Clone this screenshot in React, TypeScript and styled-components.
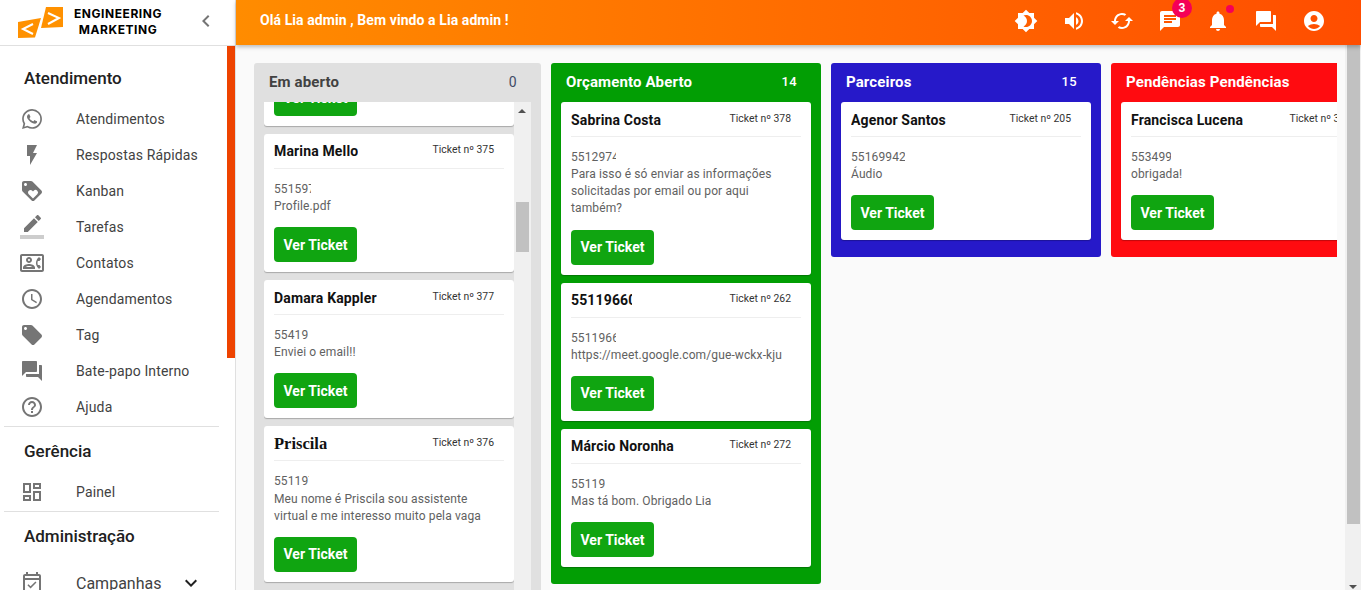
import React from "react";
import styled, { createGlobalStyle } from "styled-components";
import {
  MdAccessTime,
  MdAccountCircle,
  MdBrightness4,
  MdCached,
  MdChat,
  MdChevronLeft,
  MdExpandMore,
  MdFlashOn,
  MdForum,
  MdHelpOutline,
  MdLocalOffer,
  MdLoyalty,
  MdNotifications,
  MdOutlineContactPhone,
  MdOutlineDashboard,
  MdOutlineEventAvailable,
  MdVolumeUp,
  MdWhatsapp,
} from "react-icons/md";

interface Ticket {
  name: string;
  number: string;
  phone: string;
  phoneWidth: number;
  message: string;
  nameWidth?: number;
  serif?: boolean;
}

interface LaneData {
  title: string;
  count: number;
  color: string;
  tickets: Ticket[];
}

function TaskIcon() {
  return (
    <svg width="1em" height="1em" viewBox="0 0 24 24" fill="currentColor">
      <path d="M17.75 7 14 3.25l-10 10V17h3.75l10-10zm2.96-2.96c.39-.39.39-1.02 0-1.41L18.37.29a.9959.9959 0 0 0-1.41 0L15 2.25 18.75 6l1.96-1.96z" />
      <path d="M0 20h24v4H0z" fillOpacity=".36" />
    </svg>
  );
}

const attendance = [
  { label: "Atendimentos", icon: <MdWhatsapp /> },
  { label: "Respostas Rápidas", icon: <MdFlashOn /> },
  { label: "Kanban", icon: <MdLoyalty /> },
  { label: "Tarefas", icon: <TaskIcon /> },
  { label: "Contatos", icon: <MdOutlineContactPhone /> },
  { label: "Agendamentos", icon: <MdAccessTime /> },
  { label: "Tag", icon: <MdLocalOffer /> },
  { label: "Bate-papo Interno", icon: <MdForum /> },
  { label: "Ajuda", icon: <MdHelpOutline /> },
];

const openTickets: Ticket[] = [
  { name: "Fernanda Alves", number: "374", phone: "551188", phoneWidth: 34, message: "Obrigada" },
  { name: "Marina Mello", number: "375", phone: "5515977", phoneWidth: 37, message: "Profile.pdf" },
  { name: "Damara Kappler", number: "377", phone: "55419", phoneWidth: 34, message: "Enviei o email!!" },
  {
    name: "Priscila",
    number: "376",
    phone: "551197",
    phoneWidth: 35,
    message: "Meu nome é Priscila sou assistente virtual e me interesso muito pela vaga",
    serif: true,
  },
];

const lanes: LaneData[] = [
  {
    title: "Orçamento Aberto",
    count: 14,
    color: "#029e04",
    tickets: [
      {
        name: "Sabrina Costa",
        number: "378",
        phone: "5512974",
        phoneWidth: 45,
        message: "Para isso é só enviar as informações solicitadas por email ou por aqui também?",
      },
      {
        name: "55119660",
        nameWidth: 61,
        number: "262",
        phone: "5511966",
        phoneWidth: 45,
        message: "https://meet.google.com/gue-wckx-kju",
      },
      { name: "Márcio Noronha", number: "272", phone: "55119", phoneWidth: 34, message: "Mas tá bom. Obrigado Lia" },
    ],
  },
  {
    title: "Parceiros",
    count: 15,
    color: "#2619c9",
    tickets: [
      { name: "Agenor Santos", number: "205", phone: "55169942", phoneWidth: 54, message: "Áudio" },
    ],
  },
  {
    title: "Pendências Pendências",
    count: 9,
    color: "#ff0b10",
    tickets: [
      { name: "Francisca Lucena", number: "351", phone: "553499", phoneWidth: 40, message: "obrigada!" },
    ],
  },
];

const GlobalStyle = createGlobalStyle`
  html, body {
    margin: 0;
    height: 100%;
    overflow: hidden;
    font-family: Roboto, "Noto Sans", sans-serif;
  }
  * {
    box-sizing: border-box;
  }
`;

const Layout = styled.div`
  display: flex;
  width: 100vw;
  height: 100vh;
  background: #fafafa;
`;

const Sidebar = styled.aside`
  display: flex;
  flex-direction: column;
  flex: none;
  width: 236px;
  height: 100%;
  background: #fff;
  border-right: 1px solid #e0e0e0;
`;

const Brand = styled.div`
  display: flex;
  align-items: center;
  flex: none;
  height: 46px;
  padding: 0 18px;
  border-bottom: 1px solid #e0e0e0;
`;

const BrandName = styled.div`
  width: 106px;
  margin: -2px 0 0 1px;
  font-family: Inter, sans-serif;
  font-size: 12px;
  font-weight: 700;
  line-height: 16px;
  letter-spacing: 0.55px;
  text-align: center;
  color: #000;
`;

const CollapseButton = styled.span`
  display: flex;
  margin: -4px -1px 0 auto;
  font-size: 24px;
  color: #757575;
`;

const Nav = styled.nav`
  position: relative;
  flex: 1;
  min-height: 0;
  overflow: hidden;
`;

const NavThumb = styled.div`
  position: absolute;
  top: 0;
  right: 0;
  width: 8px;
  height: 312px;
  background: #ee4300;
`;

const SectionTitle = styled.div`
  display: flex;
  align-items: center;
  height: 44px;
  padding-left: 24px;
  font-size: 17px;
  font-weight: 500;
  color: #212121;
`;

const FirstSection = styled(SectionTitle)`
  height: 36px;
  margin-top: 14px;
  margin-bottom: 5px;
`;

const MiddleSection = styled(SectionTitle)`
  margin-bottom: 1px;
`;

const NavRow = styled.div`
  display: flex;
  align-items: center;
  height: 36px;
  padding-left: 20px;
`;

const CampaignRow = styled(NavRow)`
  margin-top: 7px;
`;

const NavIcon = styled.span`
  display: flex;
  justify-content: center;
  width: 24px;
  font-size: 24px;
  color: #757575;
`;

const NavLabel = styled.span<{ $large?: boolean }>`
  margin-left: 32px;
  font-size: ${(p) => (p.$large ? "16px" : "14px")};
  letter-spacing: ${(p) => (p.$large ? "0" : "0.14px")};
  color: #424242;
`;

const NavChevron = styled.span`
  display: flex;
  margin-left: 18px;
  font-size: 24px;
  color: #212121;
`;

const NavDivider = styled.div`
  width: 215px;
  height: 1px;
  margin: 1px 0 2px 4px;
  background: #e0e0e0;
`;

const Content = styled.div`
  display: flex;
  flex-direction: column;
  flex: 1;
  min-width: 0;
  height: 100%;
`;

const TopBar = styled.header`
  position: relative;
  z-index: 2;
  display: flex;
  align-items: center;
  flex: none;
  height: 45px;
  padding: 0 35px 3px 24px;
  background: linear-gradient(to right, #ff8c00, #ff4d00);
  box-shadow: 0 2px 4px rgba(0, 0, 0, 0.25);
`;

const Greeting = styled.div`
  flex: 1;
  padding-bottom: 2px;
  font-size: 14px;
  font-weight: 700;
  letter-spacing: 0.08px;
  color: #fff;
`;

const TopIcons = styled.div`
  display: flex;
  gap: 24px;
`;

const TopIcon = styled.span`
  position: relative;
  display: flex;
  font-size: 24px;
  color: #fff;
`;

const CountBadge = styled.span`
  position: absolute;
  top: -11px;
  right: -10px;
  display: flex;
  align-items: center;
  justify-content: center;
  width: 20px;
  height: 20px;
  border-radius: 50%;
  background: #f50057;
  font-size: 12px;
  font-weight: 700;
  color: #fff;
`;

const DotBadge = styled.span`
  position: absolute;
  top: -4px;
  right: -4px;
  width: 8px;
  height: 8px;
  border-radius: 50%;
  background: #f50057;
`;

const Main = styled.main`
  position: relative;
  flex: 1;
  min-height: 0;
  padding-right: 24px;
  overflow: hidden;
`;

const ScrollTrack = styled.div<{ $width: number }>`
  position: absolute;
  top: 0;
  right: 0;
  bottom: 0;
  width: ${(p) => p.$width}px;
  background: #f0f0f0;
`;

const ScrollThumb = styled.div<{ $top: number; $height: number }>`
  position: absolute;
  top: ${(p) => p.$top}px;
  right: 2px;
  left: 2px;
  height: ${(p) => p.$height}px;
  background: #c1c1c1;
`;

const PageThumb = styled(ScrollThumb)`
  right: 1px;
`;

const ArrowUp = styled.div`
  position: absolute;
  top: 7px;
  left: 4px;
  border: 4px solid transparent;
  border-top: 0;
  border-bottom: 4px solid #505050;
`;

const ArrowDown = styled.div`
  position: absolute;
  bottom: 1px;
  left: 4px;
  border: 4px solid transparent;
  border-bottom: 0;
  border-top: 4px solid #505050;
`;

const Board = styled.div`
  display: flex;
  align-items: flex-start;
  gap: 10px;
  height: 620px;
  margin-left: 18px;
  padding-top: 18px;
  overflow: hidden;
`;

const LaneBox = styled.section<{ $color: string; $open?: boolean }>`
  flex: none;
  width: ${(p) => (p.$open ? "287px" : "270px")};
  padding: 0 10px ${(p) => (p.$open ? "0" : "17px")};
  border-radius: 3px;
  background: ${(p) => p.$color};
`;

const LaneHeader = styled.div<{ $open?: boolean }>`
  display: flex;
  align-items: center;
  justify-content: space-between;
  height: 39px;
  padding: 0 14px 2px 5px;
  font-size: 15px;
  font-weight: 700;
  letter-spacing: 0.13px;
  color: ${(p) => (p.$open ? "#424242" : "#fff")};
`;

const LaneCount = styled.span<{ $open?: boolean }>`
  font-size: ${(p) => (p.$open ? "14px" : "13px")};
  font-weight: ${(p) => (p.$open ? 400 : 500)};
  letter-spacing: 0.4px;
  color: ${(p) => (p.$open ? "#3f4b66" : "#fff")};
`;

const TicketList = styled.div`
  display: flex;
  flex-direction: column;
  gap: 8px;
`;

const ListViewport = styled.div`
  position: relative;
  height: 548px;
  overflow: hidden;
`;

const ScrolledList = styled(TicketList)`
  margin-top: -114.5px;
`;

const Card = styled.article`
  flex: none;
  width: 250px;
  padding: 0 10px 10px;
  border-radius: 3px;
  background: #fff;
  box-shadow: 0 1px 1px rgba(0, 0, 0, 0.25);
`;

const CardHeader = styled.div`
  display: flex;
  align-items: center;
  justify-content: space-between;
  height: 35px;
  padding: 1px 10px 0 0;
  border-bottom: 1px solid #eee;
`;

const CardName = styled.span<{ $serif?: boolean; $width?: number }>`
  display: block;
  max-width: ${(p) => (p.$width ? `${p.$width}px` : "none")};
  overflow: hidden;
  white-space: nowrap;
  font-family: ${(p) => (p.$serif ? '"Liberation Serif", serif' : "inherit")};
  font-size: ${(p) => (p.$serif ? "16.5px" : "14px")};
  font-weight: 700;
  letter-spacing: ${(p) => (p.$serif ? "0" : "0.15px")};
  color: #111;
`;

const TicketNumber = styled.span`
  flex: none;
  margin-bottom: 3px;
  font-size: 10.4px;
  color: #333;
`;

const CardBody = styled.div`
  padding: 12px 0;
  font-size: 12px;
  line-height: 17.16px;
  letter-spacing: 0.12px;
  color: #616161;
`;

const Phone = styled.span<{ $width: number }>`
  display: block;
  width: ${(p) => p.$width}px;
  overflow: hidden;
  white-space: nowrap;
`;

const TicketButton = styled.button`
  display: block;
  width: 83px;
  height: 35px;
  padding: 0;
  border: 0;
  border-radius: 4px;
  background: #10a511;
  font-family: inherit;
  font-size: 14px;
  font-weight: 700;
  color: #fff;
`;

function Logo() {
  return (
    <svg width="46" height="32" viewBox="0 0 46 32">
      <polygon points="0,15 23,11 17,30.5 0,31" fill="#ff9100" />
      <polygon points="28,0 45,0 45,20 23,21" fill="#ff9100" />
      <polyline points="15,17 5,22 15,27" fill="none" stroke="#fff" strokeWidth="2" />
      <polyline points="30,6 41,11 30,17" fill="none" stroke="#fff" strokeWidth="2" />
    </svg>
  );
}

function TicketCard({ ticket }: { ticket: Ticket }) {
  return (
    <Card>
      <CardHeader>
        <CardName $serif={ticket.serif} $width={ticket.nameWidth}>
          {ticket.name}
        </CardName>
        <TicketNumber>Ticket nº {ticket.number}</TicketNumber>
      </CardHeader>
      <CardBody>
        <Phone $width={ticket.phoneWidth}>{ticket.phone}</Phone>
        {ticket.message}
      </CardBody>
      <TicketButton>Ver Ticket</TicketButton>
    </Card>
  );
}

export default function App() {
  return (
    <Layout>
      <GlobalStyle />
      <Sidebar>
        <Brand>
          <Logo />
          <BrandName>
            ENGINEERING
            <br />
            MARKETING
          </BrandName>
          <CollapseButton>
            <MdChevronLeft />
          </CollapseButton>
        </Brand>
        <Nav>
          <FirstSection>Atendimento</FirstSection>
          {attendance.map((item) => (
            <NavRow key={item.label}>
              <NavIcon>{item.icon}</NavIcon>
              <NavLabel>{item.label}</NavLabel>
            </NavRow>
          ))}
          <NavDivider />
          <MiddleSection>Gerência</MiddleSection>
          <NavRow>
            <NavIcon>
              <MdOutlineDashboard />
            </NavIcon>
            <NavLabel>Painel</NavLabel>
          </NavRow>
          <NavDivider />
          <SectionTitle>Administração</SectionTitle>
          <CampaignRow>
            <NavIcon>
              <MdOutlineEventAvailable />
            </NavIcon>
            <NavLabel $large>Campanhas</NavLabel>
            <NavChevron>
              <MdExpandMore />
            </NavChevron>
          </CampaignRow>
          <NavThumb />
        </Nav>
      </Sidebar>
      <Content>
        <TopBar>
          <Greeting>Olá Lia admin , Bem vindo a Lia admin !</Greeting>
          <TopIcons>
            <TopIcon>
              <MdBrightness4 />
            </TopIcon>
            <TopIcon>
              <MdVolumeUp />
            </TopIcon>
            <TopIcon>
              <MdCached />
            </TopIcon>
            <TopIcon>
              <MdChat />
              <CountBadge>3</CountBadge>
            </TopIcon>
            <TopIcon>
              <MdNotifications />
              <DotBadge />
            </TopIcon>
            <TopIcon>
              <MdForum />
            </TopIcon>
            <TopIcon>
              <MdAccountCircle />
            </TopIcon>
          </TopIcons>
        </TopBar>
        <Main>
          <Board>
            <LaneBox $color="#e0e0e0" $open>
              <LaneHeader $open>
                Em aberto
                <LaneCount $open>0</LaneCount>
              </LaneHeader>
              <ListViewport>
                <ScrolledList>
                  {openTickets.map((ticket) => (
                    <TicketCard key={ticket.number} ticket={ticket} />
                  ))}
                </ScrolledList>
                <ScrollTrack $width={17}>
                  <ArrowUp />
                  <ScrollThumb $top={100} $height={50} />
                </ScrollTrack>
              </ListViewport>
            </LaneBox>
            {lanes.map((lane) => (
              <LaneBox key={lane.title} $color={lane.color}>
                <LaneHeader>
                  {lane.title}
                  <LaneCount>{lane.count}</LaneCount>
                </LaneHeader>
                <TicketList>
                  {lane.tickets.map((ticket) => (
                    <TicketCard key={ticket.number} ticket={ticket} />
                  ))}
                </TicketList>
              </LaneBox>
            ))}
          </Board>
          <ScrollTrack $width={16}>
            <PageThumb $top={0} $height={479} />
            <ArrowDown />
          </ScrollTrack>
        </Main>
      </Content>
    </Layout>
  );
}
